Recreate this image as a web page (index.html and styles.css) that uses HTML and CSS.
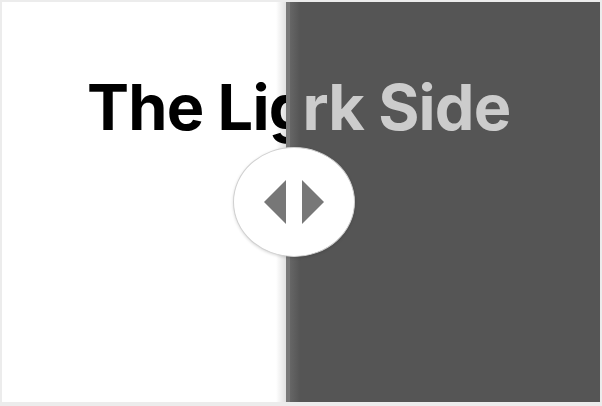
FILE: index.html
```html
<!DOCTYPE html>
<html>
<head>
<meta charset="utf-8">
<link rel="stylesheet" href="styles.css">
</head>
<body>
<div class="compare">
  <div class="pane light">
    <h1 class="title">The Light Side</h1>
  </div>
  <div class="pane dark">
    <h1 class="title">The Dark Side</h1>
  </div>
  <div class="divider"></div>
  <div class="handle">
    <svg width="60" height="44" viewBox="0 0 60 44">
      <polygon points="0,22 22,0 22,44" fill="#777"/>
      <polygon points="38,0 60,22 38,44" fill="#777"/>
    </svg>
  </div>
</div>
</body>
</html>
```
FILE: styles.css
```css
html, body {
  margin: 0;
  padding: 0;
}
body {
  background: #ececec;
  padding: 2px 2px 4px 2px;
  width: 598px;
}
.compare {
  position: relative;
  width: 598px;
  height: 400px;
  display: grid;
  overflow: hidden;
}
.pane {
  grid-area: 1 / 1;
  display: flex;
  justify-content: center;
  align-items: flex-start;
}
.light {
  background: #fff;
  color: #000;
}
.dark {
  background: #555;
  color: #ccc;
  clip-path: inset(0 0 0 288px);
}
.title {
  margin: 0;
  padding-top: 74px;
  font-family: Inter, "Liberation Sans", sans-serif;
  font-weight: 700;
  font-size: 63px;
  line-height: 1;
  letter-spacing: -0.8px;
  white-space: nowrap;
}
.divider {
  position: absolute;
  top: 0;
  bottom: 0;
  left: 284px;
  width: 4px;
  background: #787878;
}
.divider::before {
  content: "";
  position: absolute;
  top: 0;
  bottom: 0;
  right: 4px;
  width: 10px;
  background: linear-gradient(to right, rgba(0,0,0,0), rgba(0,0,0,0.12));
}
.divider::after {
  content: "";
  position: absolute;
  top: 0;
  bottom: 0;
  left: 4px;
  width: 10px;
  background: linear-gradient(to right, #666, #555);
}
.handle {
  position: absolute;
  left: 231px;
  top: 145px;
  width: 122px;
  height: 110px;
  border-radius: 50%;
  background: #fff;
  border: 1px solid #d0d0d0;
  box-sizing: border-box;
  box-shadow: 0 1px 3px rgba(0,0,0,0.15);
  display: flex;
  align-items: center;
  justify-content: center;
}
.handle svg {
  display: block;
}
```
